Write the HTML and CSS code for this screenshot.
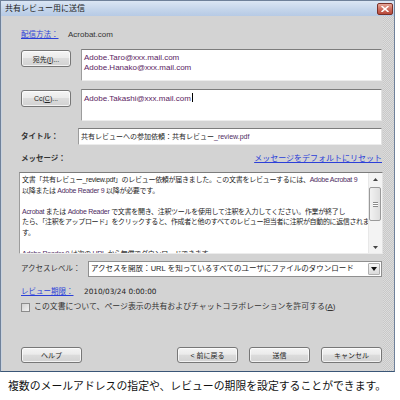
FILE: index.html
```html
<!DOCTYPE html>
<html lang="ja">
<head>
  <meta charset="UTF-8">
  <meta name="viewport" content="width=device-width, initial-scale=1.0">
  <title>共有レビュー用に送信</title>
  <link rel="stylesheet" href="styles.css">
</head>
<body>
  <div class="window">
    <!-- Barra de título -->
    <div class="titlebar">
      <span class="titlebar-text">共有レビュー用に送信</span>
      <span class="close-btn">
        <svg width="8" height="6" viewBox="0 0 8 6">
          <path d="M1 0.5 L7 5.5 M7 0.5 L1 5.5" stroke="#fff" stroke-width="1.6" stroke-linecap="round"/>
        </svg>
      </span>
    </div>

    <div class="dialog">
      <div class="row row-method">
        <a class="link method-label" href="#">配信方法：</a>
        <span class="method-value">Acrobat.com</span>
      </div>

      <div class="row row-address">
        <button class="btn btn-address" type="button">宛先(<u>I</u>)...</button>
        <div class="textbox address-box">
          <div class="mail">Adobe.Taro@xxx.mail.com</div>
          <div class="mail">Adobe.Hanako@xxx.mail.com</div>
        </div>
      </div>

      <div class="row row-address row-cc">
        <button class="btn btn-address" type="button">Cc(<u>C</u>)...</button>
        <div class="textbox address-box">
          <div class="mail">Adobe.Takashi@xxx.mail.com<span class="caret"></span></div>
        </div>
      </div>

      <div class="row row-title">
        <span class="field-label">タイトル：</span>
        <div class="textbox title-box">共有レビューへの参加依頼：共有レビュー<span class="latin">_review.pdf</span></div>
      </div>

      <div class="row row-message-head">
        <span class="field-label">メッセージ：</span>
        <a class="link reset-link" href="#">メッセージをデフォルトにリセット</a>
      </div>

      <!-- Mensagem com barra de rolagem -->
      <div class="textbox message-box">
        <div class="message-text">
          <div class="line">文書「共有レビュー<span class="latin">_review.pdf</span>」のレビュー依頼が届きました。この文書をレビューするには、<span class="latin accent">Adobe Acrobat 9</span></div>
          <div class="line">以降または <span class="latin accent">Adobe Reader 9</span> 以降が必要です。</div>
          <div class="line">&nbsp;</div>
          <div class="line"><span class="latin accent">Acrobat</span> または <span class="latin accent">Adobe Reader</span> で文書を開き、注釈ツールを使用して注釈を入力してください。作業が終了し</div>
          <div class="line line-tight">たら、「注釈をアップロード」をクリックすると、作成者と他のすべてのレビュー担当者に注釈が自動的に返信されま</div>
          <div class="line">す。</div>
          <div class="line">&nbsp;</div>
          <div class="line"><span class="latin accent">Adobe Reader 9</span> は次の <span class="latin accent">URL</span> から無償でダウンロードできます。</div>
        </div>
        <div class="scrollbar">
          <span class="scroll-arrow">
            <svg width="5" height="3" viewBox="0 0 5 3"><path d="M0 3 L2.5 0 L5 3 Z" fill="#444"/></svg>
          </span>
          <span class="scroll-track">
            <span class="scroll-thumb"><span class="grip"></span></span>
          </span>
          <span class="scroll-arrow">
            <svg width="5" height="3" viewBox="0 0 5 3"><path d="M0 0 L2.5 3 L5 0 Z" fill="#444"/></svg>
          </span>
        </div>
      </div>

      <div class="row row-access">
        <span class="field-label access-label">アクセスレベル：</span>
        <div class="select">
          <span class="select-text">アクセスを開放：<span class="latin">URL</span> を知っているすべてのユーザにファイルのダウンロード</span>
          <span class="select-arrow">
            <svg width="6" height="4" viewBox="0 0 6 4"><path d="M0 0 L3 4 L6 0 Z" fill="#111"/></svg>
          </span>
        </div>
      </div>

      <div class="row row-deadline">
        <a class="link deadline-label" href="#">レビュー期限：</a>
        <span class="deadline-value">2010/03/24 0:00:00</span>
      </div>

      <div class="row row-check">
        <span class="checkbox"></span>
        <span class="check-label">この文書について、ページ表示の共有およびチャットコラボレーションを許可する(<u>A</u>)</span>
      </div>

      <div class="row row-buttons">
        <button class="btn btn-action" type="button">ヘルプ</button>
        <div class="button-group">
          <button class="btn btn-action" type="button">&lt; 前に戻る</button>
          <button class="btn btn-action" type="button">送信</button>
          <button class="btn btn-action" type="button">キャンセル</button>
        </div>
      </div>
    </div>
  </div>

  <p class="caption">複数のメールアドレスの指定や、レビューの期限を設定することができます。</p>
</body>
</html>
```

FILE: styles.css
```css
/* Reset e estilos base */
* {
  margin: 0;
  padding: 0;
  box-sizing: border-box;
}

body {
  background-color: #fff;
  color: #1e1e1e;
  font-family: "Liberation Sans", "Noto Sans CJK JP", sans-serif;
  font-size: 7.5px;
  line-height: 1;
}

u {
  text-decoration: underline;
}

/* Janela do diálogo */
.window {
  width: 395px;
  height: 372px;
  border: 1px solid #6f819a;
  border-bottom-color: #3a5677;
  background-color: #d3d3d3;
  display: flex;
  flex-direction: column;
}

.titlebar {
  height: 15px;
  display: flex;
  align-items: center;
  justify-content: space-between;
  padding: 0 1px 0 4px;
  background: linear-gradient(#dbe6f4, #c3d4ea 60%, #b6cae5);
}

.titlebar-text {
  font-size: 8px;
  line-height: 10px;
  color: #222;
}

.close-btn {
  width: 16px;
  height: 12px;
  border: 1px solid #7a3128;
  border-radius: 2px;
  background: linear-gradient(#e6a89b, #cf6f60 50%, #b9493b);
  display: flex;
  align-items: center;
  justify-content: center;
}

.dialog {
  flex: 1;
  display: flex;
  flex-direction: column;
  padding: 13px 12px 0 19px;
  border-left: 1px solid #c9d3e0;
  background:
    linear-gradient(to right, #d3d3d3 calc(100% - 11px), transparent 0),
    repeating-conic-gradient(#c8c8c8 0 25%, #dcdcdc 0 50%) 0 0 / 2px 2px;
}

.row {
  display: flex;
  align-items: center;
}

/* Links */
.link {
  color: #2b3fd8;
  text-decoration: underline;
  white-space: nowrap;
}

.latin {
  font-family: "Liberation Sans", sans-serif;
}

.accent {
  color: #4e2b62;
}

/* Método de envio */
.row-method {
  height: 12px;
  line-height: 12px;
}

.method-label {
  width: 47px;
}

.method-value {
  font-size: 8px;
  color: #333;
}

/* Destinatários */
.row-address {
  margin-top: 8px;
  height: 32px;
  align-items: flex-start;
}

.btn {
  font-family: inherit;
  font-size: 7px;
  color: #222;
  border: 1px solid #777;
  border-radius: 3px;
  background: linear-gradient(#f4f4f4, #ebebeb 45%, #dcdcdc 50%, #d2d2d2);
  box-shadow: inset 0 0 0 1px rgba(255, 255, 255, 0.7);
  white-space: nowrap;
}

.btn-address {
  width: 50px;
  height: 17px;
  margin-top: 1px;
  margin-right: 10px;
}

.textbox {
  background-color: #fff;
  border: 1px solid;
  border-color: #7c7c7c #e2e2e2 #ececec #9c9c9c;
}

.address-box {
  width: 301px;
  height: 32px;
  padding: 3px 2px 0;
}

.mail {
  font-size: 8px;
  line-height: 9.5px;
  color: #5a2362;
  white-space: nowrap;
}

.caret {
  display: inline-block;
  width: 1px;
  height: 9px;
  margin-left: 1px;
  vertical-align: -1px;
  background-color: #000;
}

/* Título e mensagem */
.row-title {
  margin-top: 7px;
  height: 17px;
}

.field-label {
  font-size: 7.5px;
  font-weight: bold;
  color: #333;
  width: 57px;
  white-space: nowrap;
}

.title-box {
  width: 304px;
  height: 17px;
  padding-left: 2px;
  font-size: 7px;
  line-height: 15px;
  white-space: nowrap;
  overflow: hidden;
}

.title-box .latin {
  color: #4e2b62;
}

.row-message-head {
  margin-top: 8px;
  height: 11px;
  justify-content: space-between;
}

.reset-link {
  font-size: 8px;
}

.message-box {
  margin-top: 8px;
  margin-left: -2px;
  width: 364px;
  height: 82px;
  display: flex;
  overflow: hidden;
}

.message-text {
  flex: 1;
  padding: 2px 0 0 2px;
  font-size: 7px;
  letter-spacing: -0.28px;
  overflow: hidden;
}

.line {
  line-height: 10.6px;
  white-space: nowrap;
}

.line-tight {
  letter-spacing: -0.36px;
}

.scrollbar {
  width: 14px;
  display: flex;
  flex-direction: column;
  background-color: #f3f3f3;
  border-left: 1px solid #e8e8e8;
}

.scroll-arrow {
  height: 12px;
  display: flex;
  align-items: center;
  justify-content: center;
}

.scroll-track {
  flex: 1;
  padding-top: 2px;
}

.scroll-thumb {
  display: flex;
  align-items: center;
  justify-content: center;
  width: 12px;
  height: 34px;
  border: 1px solid #9a9a9a;
  border-radius: 2px;
  background: linear-gradient(to right, #f2f2f2, #dedede);
}

.grip {
  width: 5px;
  height: 5px;
  border-top: 1px solid #8a8a8a;
  border-bottom: 1px solid #8a8a8a;
  background: linear-gradient(#fff 40%, #8a8a8a 40% 60%, #fff 60%);
}

/* Nível de acesso */
.row-access {
  margin-top: 7px;
  height: 16px;
}

.access-label {
  font-weight: normal;
  width: 67px;
}

.select {
  width: 294px;
  height: 16px;
  display: flex;
  align-items: center;
  border: 1px solid #8f8f8f;
  background-color: #fff;
}

.select-text {
  flex: 1;
  padding-left: 2px;
  font-size: 7.5px;
  white-space: nowrap;
  overflow: hidden;
}

.select-arrow {
  width: 12px;
  height: 12px;
  margin: 0 1px;
  display: flex;
  align-items: center;
  justify-content: center;
  border: 1px solid #b0b0b0;
  border-radius: 1px;
  background: linear-gradient(#f6f6f6, #dadada);
}

/* Prazo da revisão */
.row-deadline {
  margin-top: 9px;
  height: 11px;
}

.deadline-label {
  width: 63px;
}

.deadline-value {
  font-family: "DejaVu Sans", sans-serif;
  font-size: 7.3px;
  color: #222;
}

.row-check {
  margin-top: 5px;
  height: 10px;
}

.checkbox {
  width: 9px;
  height: 9px;
  margin-right: 4px;
  border: 1px solid #8c8c8c;
  background: linear-gradient(135deg, #d2d2d2, #f2f2f2);
}

.check-label {
  font-size: 7.9px;
  color: #333;
  white-space: nowrap;
}

/* Botões de ação */
.row-buttons {
  margin-top: 35px;
  height: 16px;
  justify-content: space-between;
}

.button-group {
  display: flex;
  gap: 11px;
}

.btn-action {
  width: 61px;
  height: 16px;
}

/* Legenda */
.caption {
  margin: 6px 0 0 8px;
  font-family: "Noto Sans CJK JP", sans-serif;
  font-size: 10.85px;
  line-height: 14px;
  color: #111;
  white-space: nowrap;
}
```
